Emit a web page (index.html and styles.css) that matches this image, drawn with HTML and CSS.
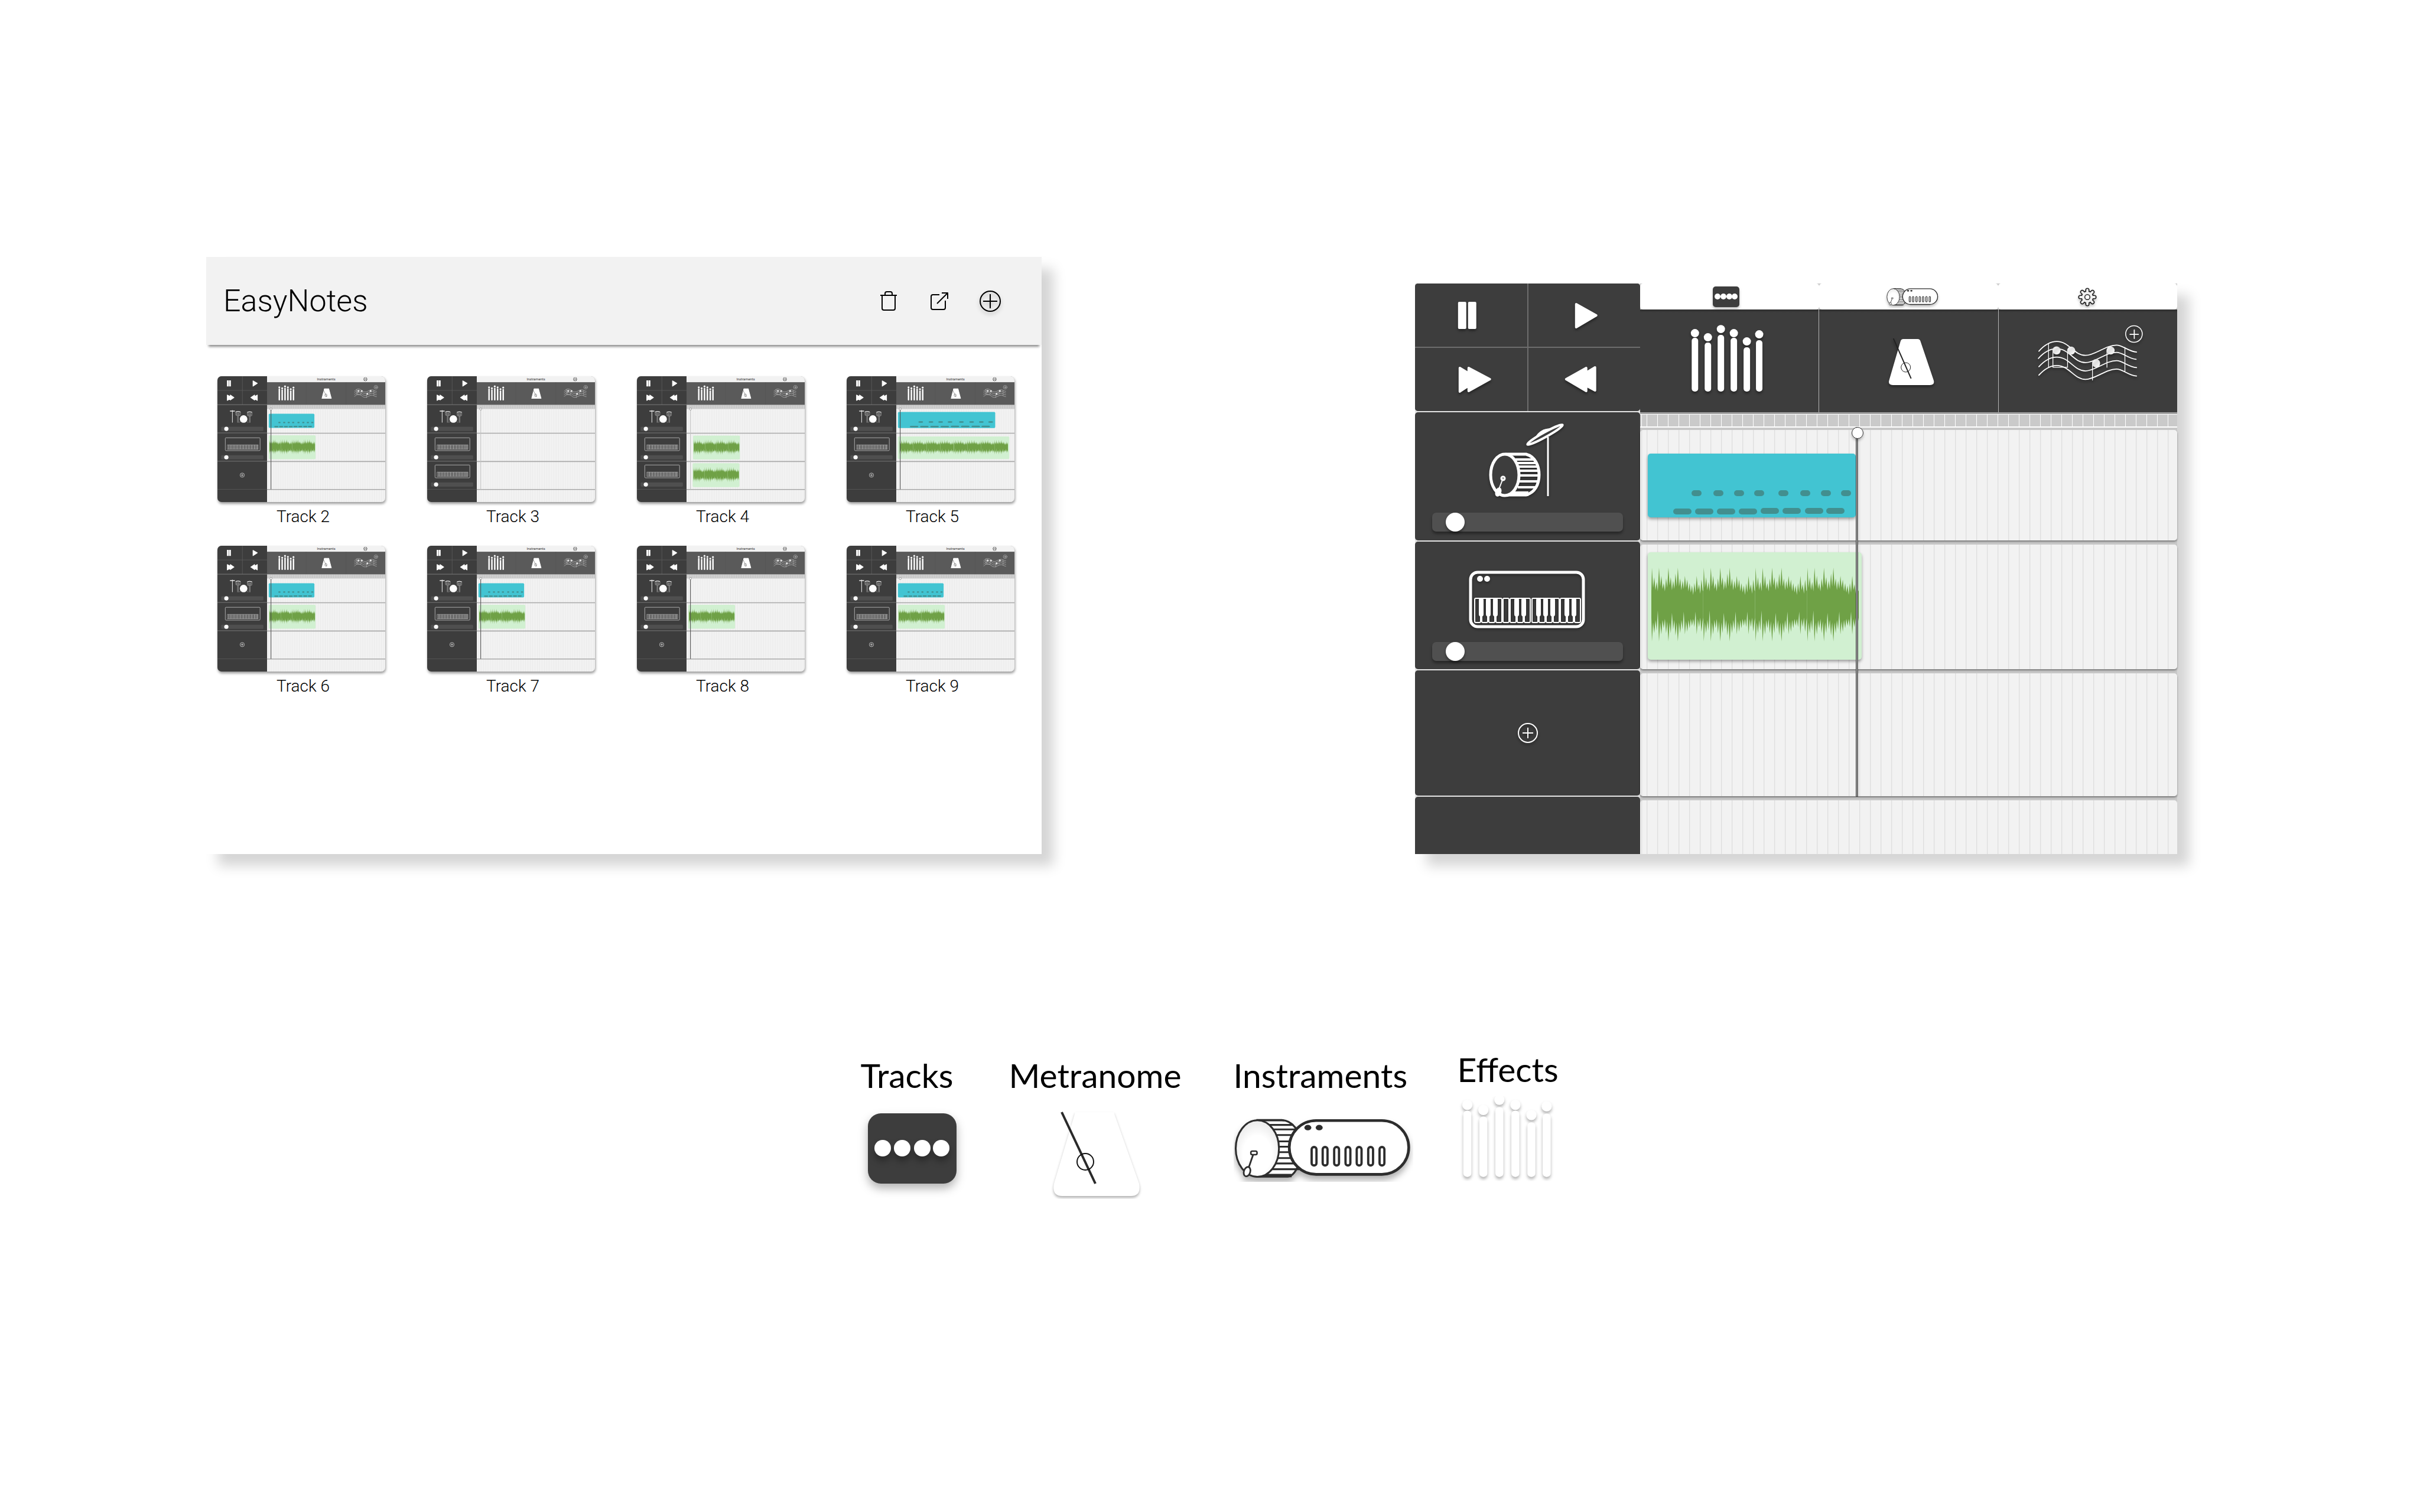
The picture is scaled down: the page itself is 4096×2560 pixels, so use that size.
FILE: index.html
```html
<!DOCTYPE html>
<html lang="en">
<head>
<meta charset="utf-8">
<title>EasyNotes</title>
<link rel="stylesheet" href="styles.css">
</head>
<body>

<svg class="defs" aria-hidden="true">
  <defs>
    <linearGradient id="note-fill" x1="0" y1="0" x2="1" y2="1">
      <stop offset="0" stop-color="#fff"/><stop offset=".45" stop-color="#ddd"/><stop offset="1" stop-color="#fff"/>
    </linearGradient>
    <radialGradient id="head-fill" cx=".5" cy=".6" r=".55">
      <stop offset=".6" stop-color="#fff"/><stop offset="1" stop-color="#ededed"/>
    </radialGradient>
    <pattern id="mini-lines" x="343" y="0" width="15.5" height="40" patternUnits="userSpaceOnUse">
      <rect width="15.5" height="40" fill="#f2f2f2"/><rect x="12" width="3" height="40" fill="#e9e9e9"/>
    </pattern>
    <pattern id="mini-ruler" x="343" y="0" width="15.5" height="40" patternUnits="userSpaceOnUse">
      <rect width="15.5" height="40" fill="#c9c9c9"/><rect x="12" width="2" height="40" fill="#e2e2e2"/>
    </pattern>

    <g id="staff" fill="none" stroke="#fff" stroke-width="7" stroke-linecap="round">
      <path d="M98 463C135 422 170 399 217 399C300 399 330 491 407 491C470 491 540 423 612 423C655 423 690 465 745 469"/>
      <path d="M95 511C132 470 170 447 217 447C300 447 330 539 407 539C470 539 540 471 612 471C655 471 690 513 742 517"/>
      <path d="M98 566C135 525 170 502 217 502C300 502 330 594 407 594C470 594 540 526 612 526C655 526 690 568 745 572"/>
      <path d="M98 622C135 581 170 558 217 558C300 558 330 650 407 650C470 650 540 582 612 582C655 582 690 624 745 628"/>
      <path d="M162 412V571M191 460V570H288V465M453 545V655M549 462V570M668 438V596" stroke-width="5"/>
      <g fill="url(#note-fill)" stroke="none">
        <circle cx="215" cy="458" r="27"/><circle cx="312" cy="459" r="27"/><circle cx="477" cy="543" r="27"/><circle cx="573" cy="458" r="27"/>
      </g>
      <circle cx="728" cy="349" r="55" stroke-width="6"/>
      <path d="M702 352H757M730 322V379"/>
    </g>

    <g id="sliders" fill="#fff">
      <circle cx="93" cy="40" r="7"/><circle cx="115" cy="47" r="7"/><circle cx="137" cy="33" r="7"/>
      <circle cx="159" cy="40" r="7"/><circle cx="181" cy="54" r="7"/><circle cx="202" cy="42" r="7"/>
      <rect x="87.500" y="48" width="11" height="91" rx="5"/><rect x="109.500" y="56" width="11" height="83" rx="5"/>
      <rect x="131.500" y="43" width="11" height="96" rx="5"/><rect x="153.500" y="48" width="11" height="91" rx="5"/>
      <rect x="175.500" y="64" width="11" height="75" rx="5"/><rect x="196.500" y="52" width="11" height="87" rx="5"/>
    </g>

    <g id="instruments" fill="none" stroke="#2d2d2d">
      <path d="M213 88H375C440 92 500 150 505 275C500 400 450 460 415 462H213Z" fill="#fff" stroke-width="13"/>
      <path d="M230 120H452M230 150H470M230 187H470M230 229H470M230 264H470M230 300H470M230 339H470M230 375H480M230 413H490" stroke-width="12"/>
      <path d="M213 455H440" stroke-width="22"/><path d="M213 90H390" stroke-width="12"/>
      <ellipse cx="213" cy="276" rx="143" ry="187" fill="url(#head-fill)" stroke-width="12"/>
      <path d="M185 318L158 396" stroke-width="11"/>
      <rect x="170" y="293" width="41" height="24" rx="10" fill="#fff" stroke-width="10"/>
      <ellipse cx="145" cy="429" rx="21" ry="32" transform="rotate(18 145 429)" fill="#fff" stroke-width="11"/>
      <rect x="424" y="91" width="790" height="356" rx="178" fill="#fff" stroke-width="18"/>
      <g fill="#2d2d2d" stroke="none"><ellipse cx="547" cy="138" rx="23" ry="18"/><ellipse cx="622" cy="138" rx="23" ry="18"/></g>
      <g stroke-width="15">
        <rect x="572" y="266" width="32" height="122" rx="16"/><rect x="645" y="266" width="32" height="122" rx="16"/>
        <rect x="721" y="266" width="32" height="122" rx="16"/><rect x="796" y="266" width="32" height="122" rx="16"/>
        <rect x="870" y="266" width="32" height="122" rx="16"/><rect x="946" y="266" width="32" height="122" rx="16"/>
        <rect x="1021" y="266" width="32" height="122" rx="16"/>
      </g>
    </g>

    <g id="gear" stroke-linecap="round">
      <g stroke="#222" stroke-width="28"><path d="M0-47V47M-47 0H47M-34-34L34 34M-34 34L34-34"/></g>
      <circle r="43" fill="#222"/>
      <g stroke="#efefef" stroke-width="15"><path d="M0-47V47M-47 0H47M-34-34L34 34M-34 34L34-34"/></g>
      <circle r="36" fill="#efefef"/>
      <circle r="17" fill="#fff" stroke="#222" stroke-width="6"/>
    </g>

    <g id="wave-part">
      <path d="M0-22L1-62L3-28L5-46L7-24L9-38L11-22L13-62L15-30L17-48L19-26L21-36L23-22L25-44L27-28L29-62L31-32L33-46L35-24L37-40L39-26L41-52L43-30L45-62L47-30L49-44L51-24L53-40L55-26L57-48L59-28L61-42L63-22L65-36L67-20L69-32L71-16L73-36L75-20L77-48L79-24L81-34L83-18L85-42L87-24L88-22V22L87 28L85 46L83 22L81 38L79 24L77 50L75 12L73 38L71 24L69 36L67 24L65 40L63 26L61 46L59 28L57 50L55 12L53 42L51 26L49 48L47 30L45 62L43 30L41 52L39 26L37 42L35 14L33 48L31 30L29 62L27 28L25 48L23 24L21 40L19 26L17 50L15 30L13 62L11 10L9 44L7 26L5 48L3 30L1 62L0 22Z"/>
    </g>
    <symbol id="wave" viewBox="0 -63 352 126" preserveAspectRatio="none">
      <g fill="#6fa146"><use href="#wave-part"/><use href="#wave-part" x="88"/><use href="#wave-part" x="176"/><use href="#wave-part" x="264"/></g>
    </symbol>
    <symbol id="beats" viewBox="0 0 352 108" preserveAspectRatio="none">
      <g fill="#428f8f">
        <rect x="74" y="62" width="17" height="10" rx="5"/><rect x="111" y="62" width="17" height="10" rx="5"/><rect x="146" y="62" width="17" height="10" rx="5"/><rect x="180" y="62" width="17" height="10" rx="5"/>
        <rect x="221" y="62" width="17" height="10" rx="5"/><rect x="258" y="62" width="17" height="10" rx="5"/><rect x="293" y="62" width="17" height="10" rx="5"/><rect x="327" y="62" width="17" height="10" rx="5"/>
        <rect x="43" y="93" width="31" height="10" rx="5"/><rect x="80" y="93" width="31" height="10" rx="5"/><rect x="117" y="93" width="31" height="10" rx="5"/><rect x="154" y="93" width="31" height="10" rx="5"/>
        <rect x="191" y="92" width="31" height="10" rx="5"/><rect x="228" y="92" width="31" height="10" rx="5"/><rect x="266" y="92" width="31" height="10" rx="5"/><rect x="302" y="92" width="31" height="10" rx="5"/>
      </g>
    </symbol>

    <!-- Parts of the project miniatures -->
    <g id="mini-slider">
      <rect x="41" y="0" width="279" height="28" rx="6" fill="#4f4f4f"/><circle cx="75" cy="14" r="14" fill="#fff"/>
    </g>
    <g id="mini-plus" fill="none" stroke="#ddd" stroke-width="3">
      <circle cx="180" cy="669" r="14"/><path d="M172 669H188M180 661V677"/>
    </g>
    <g id="mini-keys">
      <g fill="none" stroke="#ccc">
        <rect x="68" y="422" width="230" height="85" rx="5" stroke-width="3"/>
        <path d="M81 469H286V498H81Z" stroke-width="2"/>
        <path d="M90 469V498M100 469V498M110 469V498M120 469V498M130 469V498M140 469V498M150 469V498M160 469V498M170 469V498M180 469V498M190 469V498M200 469V498M210 469V498M220 469V498M230 469V498M240 469V498M250 469V498M260 469V498M270 469V498M279 469V498" stroke-width="4"/>
      </g>
      <use href="#mini-slider" y="537"/>
    </g>
    <g id="mini-frame">
      <rect x="16" y="15" width="1109" height="832" fill="#a9a9a9"/>
      <rect x="343" y="15" width="782" height="39" fill="#f2f2f2"/>
      <rect x="343" y="55" width="782" height="148" fill="#5a5a5a"/>
      <path d="M602 55V203M866 55V203" stroke="#525252" stroke-width="2"/>
      <rect x="343" y="206" width="782" height="24" fill="url(#mini-ruler)"/>
      <path d="M343 231H1125V389H343ZM343 395H1125V576H343ZM343 582H1125V761H343ZM343 767H1125V847H343Z" fill="url(#mini-lines)"/>
      <rect x="16" y="15" width="328" height="832" fill="#3d3d3d"/>
      <path d="M181 15V203M16 109H344" stroke="#5e5e5e" stroke-width="3"/>
      <path d="M16 203H344M16 390H344M16 577H344" stroke="#8c8c8c" stroke-width="3"/>
      <path d="M16 763H344" stroke="#5a5a5a" stroke-width="3"/>
      <g fill="#fff">
        <rect x="79" y="42" width="12" height="40" rx="2"/><rect x="93" y="42" width="12" height="40" rx="2"/>
        <g stroke="#fff" stroke-width="4" stroke-linejoin="round">
          <path d="M251 45L280 62L251 81ZM81 139L101 150V139L126 156L101 173V165L81 175ZM280 139L262 150V139L236 156L262 173V165L280 175Z"/>
          <path d="M723 98H752L769 161H707Z"/>
        </g>
        <use href="#sliders" transform="translate(345 53) scale(.86 .88)"/>
        <path d="M99 243H131V248H99ZM113 240H117V322H113Z" opacity=".9"/>
        <circle cx="189" cy="298" r="25"/>
      </g>
      <path d="M712 97L739 152M733 132A7 9 0 1 0 733 150A7 9 0 1 0 733 132" fill="none" stroke="#444" stroke-width="2"/>
      <use href="#staff" transform="translate(900 9.500) scale(.2246)"/>
      <g fill="none" stroke="#ccc" stroke-width="2">
        <path d="M136 252Q152 244 169 252L167 273Q152 280 138 273ZM142 255V272M148 256V274M154 256V274M160 256V274M149 277V322M154 277V322M213 254Q229 246 245 254L243 276Q229 282 215 276ZM219 258V275M225 258V277M231 258V277M237 258V275M227 279V322M232 279V322M168 312L160 322M210 312L219 322"/>
        <path d="M137 251Q152 245 168 251M214 253Q229 247 244 253" stroke="#fff" stroke-width="4"/>
      </g>
      <use href="#mini-slider" y="349"/>
      <use href="#mini-keys"/>
      <use href="#gear" transform="translate(994 35) scale(.22)"/>
    </g>
    <g id="mini-head"><circle cx="370" cy="232" r="7" fill="#fff" stroke="#555" stroke-width="2"/></g>
    <g id="mini-playhead"><path d="M370 238V763" stroke="#4a4a4a" stroke-width="4"/><use href="#mini-head"/></g>
    <g id="mini-playhead-off"><path d="M370 238V763" stroke="#c4c4c4" stroke-width="4"/><use href="#mini-head"/></g>
    <g id="mini-blue"><rect x="355" y="263" width="302" height="94" rx="7" fill="#42c4d2"/><use href="#beats" x="355" y="263" width="302" height="94"/></g>
    <g id="mini-green"><rect x="355" y="406" width="310" height="158" rx="7" fill="#d1f0d1"/><use href="#wave" x="359" y="430" width="303" height="104"/></g>
  </defs>
</svg>

<main class="showcase">
  <section class="library">
    <header class="library-bar">
      <h1 class="library-title">EasyNotes</h1>
      <div class="library-actions">
        <button class="icon-button" type="button" aria-label="Delete">
          <svg viewBox="0 0 40 40"><path d="M6 10H34M9 10V32Q9 35 12 35H28Q31 35 31 32V10M14 10V7Q14 4 17 4H23Q26 4 26 7V10"/></svg>
        </button>
        <button class="icon-button" type="button" aria-label="Share">
          <svg viewBox="0 0 40 40"><path d="M20 9H9Q6 9 6 12V31Q6 34 9 34H27Q30 34 30 31V19M16 24L34 6M24 6H34V16"/></svg>
        </button>
        <button class="icon-button icon-button--raised" type="button" aria-label="New track">
          <svg viewBox="0 0 40 40"><circle cx="20" cy="20" r="17"/><path d="M8 20H32M20 8V32"/></svg>
        </button>
      </div>
    </header>
    <ul class="projects">
      <li><a class="project" href="#track-2">
        <svg class="project-thumb" viewBox="16 15 1109 832" preserveAspectRatio="none"><use href="#mini-frame"/><text class="thumb-text" x="735" y="41">Instraments</text><use href="#mini-plus"/><use href="#mini-blue"/><use href="#mini-green"/><use href="#mini-playhead"/></svg>
        <span class="project-name">Track 2</span></a></li>
      <li><a class="project" href="#track-3">
        <svg class="project-thumb" viewBox="16 15 1109 832" preserveAspectRatio="none"><use href="#mini-frame"/><text class="thumb-text" x="735" y="41">Instraments</text><use href="#mini-keys" y="180"/><use href="#mini-playhead-off"/></svg>
        <span class="project-name">Track 3</span></a></li>
      <li><a class="project" href="#track-4">
        <svg class="project-thumb" viewBox="16 15 1109 832" preserveAspectRatio="none"><use href="#mini-frame"/><text class="thumb-text" x="735" y="41">Instraments</text><use href="#mini-keys" y="180"/><use href="#mini-playhead-off"/><use href="#mini-green" x="32" y="2"/><use href="#mini-green" x="29" y="184"/></svg>
        <span class="project-name">Track 4</span></a></li>
      <li><a class="project" href="#track-5">
        <svg class="project-thumb" viewBox="16 15 1109 832" preserveAspectRatio="none"><use href="#mini-frame"/><text class="thumb-text" x="735" y="41">Instraments</text><use href="#mini-plus"/><rect x="355" y="251" width="643" height="107" rx="7" fill="#42c4d2"/><use href="#beats" x="355" y="251" width="643" height="107"/><rect x="354" y="413" width="737" height="150" rx="7" fill="#d1f0d1"/><use href="#wave" x="365" y="434" width="359" height="100"/><use href="#wave" x="724" y="434" width="359" height="100"/><use href="#mini-playhead"/></svg>
        <span class="project-name">Track 5</span></a></li>
      <li><a class="project" href="#track-6">
        <svg class="project-thumb" viewBox="16 15 1109 832" preserveAspectRatio="none"><use href="#mini-frame"/><text class="thumb-text" x="735" y="41">Instraments</text><use href="#mini-plus"/><use href="#mini-blue"/><use href="#mini-green"/><use href="#mini-playhead"/></svg>
        <span class="project-name">Track 6</span></a></li>
      <li><a class="project" href="#track-7">
        <svg class="project-thumb" viewBox="16 15 1109 832" preserveAspectRatio="none"><use href="#mini-frame"/><text class="thumb-text" x="735" y="41">Instraments</text><use href="#mini-plus"/><use href="#mini-blue"/><use href="#mini-green"/><use href="#mini-playhead"/></svg>
        <span class="project-name">Track 7</span></a></li>
      <li><a class="project" href="#track-8">
        <svg class="project-thumb" viewBox="16 15 1109 832" preserveAspectRatio="none"><use href="#mini-frame"/><text class="thumb-text" x="735" y="41">Instraments</text><use href="#mini-plus"/><use href="#mini-green"/><use href="#mini-playhead"/></svg>
        <span class="project-name">Track 8</span></a></li>
      <li><a class="project" href="#track-9">
        <svg class="project-thumb" viewBox="16 15 1109 832" preserveAspectRatio="none"><use href="#mini-frame"/><text class="thumb-text" x="735" y="41">Instraments</text><use href="#mini-plus"/><use href="#mini-blue"/><use href="#mini-green"/><use href="#mini-head"/></svg>
        <span class="project-name">Track 9</span></a></li>
    </ul>
  </section>

  <section class="editor">
    <div class="sidebar">
      <div class="transport">
        <button class="transport-button" type="button" aria-label="Pause">
          <svg viewBox="0 0 190 107"><rect x="73" y="31" width="14" height="46" rx="2"/><rect x="90" y="31" width="14" height="46" rx="2"/></svg>
        </button>
        <button class="transport-button" type="button" aria-label="Play">
          <svg viewBox="0 0 190 107"><path d="M81 35L115 54L81 74Z"/></svg>
        </button>
        <button class="transport-button" type="button" aria-label="Fast forward">
          <svg viewBox="0 0 190 107"><path d="M76 34L91 43V34L127 53L91 73V64L76 74Z"/></svg>
        </button>
        <button class="transport-button" type="button" aria-label="Rewind">
          <svg viewBox="0 0 190 107"><path d="M113 33L98 42V34L64 53L98 73V64L113 72Z"/></svg>
        </button>
      </div>
      <div class="channel channel--first">
        <svg class="channel-icon" viewBox="0 0 381 170">
          <g fill="none" stroke="#fff">
            <path d="M153 71H188C203 75 210 90 210 106C210 122 203 136 188 140H153" stroke-width="5"/>
            <path d="M170 80H200M173 86H205M175 92H208M177 99H209M178 107H209M177 117H208M174 127H205" stroke-width="4"/>
            <path d="M160 138H192" stroke-width="8"/>
            <ellipse cx="152" cy="106" rx="24" ry="35" fill="#3d3d3d" stroke-width="5"/>
            <path d="M149 112L142 130" stroke-width="2"/>
            <circle cx="149" cy="112" r="3" stroke-width="3"/>
            <ellipse cx="141" cy="135" rx="3" ry="6" transform="rotate(20 141 135)" fill="#fff" stroke-width="4"/>
            <path d="M225 42V142" stroke-width="3"/>
            <g transform="rotate(-29 220 38)">
              <path d="M204 34Q219 25 234 34Z" fill="#fff" stroke-width="1"/>
              <ellipse cx="220" cy="38" rx="34" ry="4" fill="#3d3d3d" stroke-width="4"/>
            </g>
          </g>
        </svg>
        <input class="volume" type="range" min="0" max="100" value="8" aria-label="Drums volume">
      </div>
      <div class="channel channel--second">
        <svg class="channel-icon" viewBox="0 0 381 170">
          <g fill="none" stroke="#fff">
            <rect x="94" y="52" width="191" height="92" rx="12" stroke-width="5"/>
            <g stroke-width="2">
              <rect x="101" y="96" width="10" height="41" rx="2"/><rect x="113" y="96" width="10" height="41" rx="2"/><rect x="125" y="96" width="10" height="41" rx="2"/><rect x="137" y="96" width="10" height="41" rx="2"/><rect x="149" y="96" width="10" height="41" rx="2"/>
              <rect x="161" y="96" width="10" height="41" rx="2"/><rect x="173" y="96" width="10" height="41" rx="2"/><rect x="185" y="96" width="10" height="41" rx="2"/><rect x="198" y="96" width="10" height="41" rx="2"/><rect x="210" y="96" width="10" height="41" rx="2"/>
              <rect x="222" y="96" width="10" height="41" rx="2"/><rect x="234" y="96" width="10" height="41" rx="2"/><rect x="246" y="96" width="10" height="41" rx="2"/><rect x="258" y="96" width="10" height="41" rx="2"/><rect x="270" y="96" width="10" height="41" rx="2"/>
            </g>
            <path d="M112 99V123M124 99V123M136 99V123M172 99V123M184 99V123M209 99V123M221 99V123M233 99V123M257 99V123M269 99V123" stroke-width="8" stroke-linecap="round"/>
          </g>
          <g fill="#fff"><circle cx="110" cy="63" r="5"/><circle cx="122" cy="63" r="5"/></g>
        </svg>
        <input class="volume" type="range" min="0" max="100" value="8" aria-label="Keyboard volume">
      </div>
      <button class="channel channel--add" type="button" aria-label="Add instrument">
        <svg class="add-icon" viewBox="0 0 36 36"><circle cx="18" cy="18" r="16"/><path d="M9 18H27M18 9V27"/></svg>
      </button>
      <div class="channel channel--last"></div>
    </div>

    <div class="stage">
      <nav class="tabs">
        <button class="tab" type="button" aria-label="Tracks">
          <svg viewBox="0 0 303 44"><rect x="123" y="5" width="45" height="35" rx="5" fill="#3d3d3d"/><g fill="#fff"><circle cx="131" cy="22" r="5"/><circle cx="141" cy="22" r="5"/><circle cx="151" cy="22" r="5"/><circle cx="160" cy="22" r="5"/></g></svg>
        </button>
        <button class="tab" type="button" aria-label="Instruments">
          <svg viewBox="0 0 303 44"><use href="#instruments" transform="translate(109.500 2) scale(.075)"/></svg>
        </button>
        <button class="tab" type="button" aria-label="Settings">
          <svg viewBox="0 0 303 44"><use href="#gear" transform="translate(151 23) scale(.256)"/></svg>
        </button>
      </nav>
      <div class="tiles">
        <button class="tile" type="button" aria-label="Effects">
          <svg viewBox="0 0 303 174"><use href="#sliders"/></svg>
        </button>
        <button class="tile" type="button" aria-label="Metronome">
          <svg viewBox="0 0 303 174">
            <path d="M143 50H167Q171 50 172 54L194 119Q197 128 188 128H125Q116 128 119 119L138 54Q139 50 143 50Z" fill="#fff"/>
            <path d="M126 49L156 117" stroke="#222" stroke-width="2"/><circle cx="147" cy="98" r="8" fill="none" stroke="#222"/>
          </svg>
        </button>
        <button class="tile" type="button" aria-label="Add notes">
          <svg viewBox="0 0 303 174"><use href="#staff" transform="translate(43 -48) scale(.256)"/></svg>
        </button>
      </div>
      <div class="timeline">
        <div class="ruler"></div>
        <div class="lane lane--first">
          <svg class="clip clip--beats" viewBox="0 0 352 108"><use href="#beats" width="352" height="108"/></svg>
        </div>
        <div class="lane lane--second">
          <svg class="clip clip--audio" viewBox="0 0 362 182"><use href="#wave" x="6" y="25" width="351" height="127"/></svg>
        </div>
        <div class="lane lane--third"></div>
        <div class="lane lane--last"></div>
        <div class="playhead"></div>
      </div>
    </div>
  </section>
</main>

<section class="legend">
  <figure class="legend-item">
    <figcaption class="legend-name">Tracks</figcaption>
    <svg class="legend-icon legend-icon--tracks" width="176" height="150" viewBox="0 0 176 150">
      <rect x="12" y="19" width="150" height="119" rx="22" fill="#3d3d3d"/>
      <g class="legend-dots" fill="#fff"><circle cx="37" cy="78" r="14"/><circle cx="70" cy="78" r="14"/><circle cx="104" cy="78" r="14"/><circle cx="136" cy="78" r="14"/></g>
    </svg>
  </figure>
  <figure class="legend-item">
    <figcaption class="legend-name">Metranome</figcaption>
    <svg class="legend-icon" width="240" height="164" viewBox="0 0 240 164">
      <path class="lifted" d="M112 17L76 138Q72 159 90 159H206Q224 159 220 138L177 17Z" fill="#fff"/>
      <path d="M89 17L146 138" stroke="#2a2a2a" stroke-width="4"/><circle cx="129" cy="101" r="14" fill="none" stroke="#111" stroke-width="2"/>
    </svg>
  </figure>
  <figure class="legend-item">
    <figcaption class="legend-name">Instraments</figcaption>
    <svg class="legend-icon" width="304" height="135" viewBox="-4 0 304 135">
      <use class="lifted-far" href="#instruments" transform="translate(-18.400 7.900) scale(.256)"/>
    </svg>
  </figure>
  <figure class="legend-item legend-item--raised">
    <figcaption class="legend-name">Effects</figcaption>
    <svg class="legend-icon" width="170" height="144" viewBox="0 0 170 144">
      <use class="lifted" href="#sliders" transform="translate(-98 -34.600) scale(1.232)"/>
    </svg>
  </figure>
</section>

</body>
</html>
```
FILE: styles.css
```css
* {
  box-sizing: border-box;
}

body {
  margin: 0;
  background: #fff;
  color: #000;
  font-family: Roboto, "Liberation Sans", sans-serif;
}

button {
  display: block;
  padding: 0;
  border: 0;
  background: none;
  cursor: pointer;
}

svg {
  display: block;
}

.defs {
  position: absolute;
  width: 0;
  height: 0;
}

.showcase {
  display: grid;
  grid-template-columns: 1414fr 1290fr;
  column-gap: 632px;
  align-items: end;
  padding: 435px 411px 0 349px;
}

.library,
.editor {
  box-shadow: 20px 20px 20px rgba(0, 0, 0, 0.17);
}

/* Project library */

.library {
  background: #fff;
}

.library-bar {
  display: flex;
  align-items: center;
  justify-content: space-between;
  height: 149px;
  padding: 0 67px 0 29px;
  background: #f2f2f2;
  box-shadow: 0 7px 4px -4px rgba(0, 0, 0, 0.45);
}

.library-title {
  margin: 0;
  font-size: 52px;
  font-weight: 300;
  line-height: 60px;
}

.library-actions {
  display: flex;
  gap: 46px;
}

.icon-button {
  width: 40px;
  height: 40px;
}

.icon-button svg {
  width: 100%;
  fill: none;
  stroke: #000;
  stroke-width: 2;
  stroke-linejoin: round;
}

.icon-button--raised svg {
  filter: drop-shadow(0 4px 3px rgba(0, 0, 0, 0.25));
}

.projects {
  display: grid;
  grid-template-columns: repeat(4, 1fr);
  align-content: start;
  gap: 31px 71px;
  min-height: 862px;
  margin: 0;
  padding: 53px 46px 0 19px;
  list-style: none;
}

.project {
  display: flex;
  flex-direction: column;
  gap: 7px;
  color: #000;
  text-align: center;
  text-decoration: none;
}

.project-thumb {
  width: 100%;
  height: 213px;
  border-radius: 7px;
  box-shadow: 1px 3px 4px rgba(0, 0, 0, 0.4);
}

.thumb-text {
  font-size: 23px;
  text-anchor: middle;
  fill: #333;
}

.project-name {
  padding-left: 6px;
  font-size: 28px;
  font-weight: 300;
  line-height: 36px;
}

/* Track editor */

.editor {
  display: grid;
  grid-template-columns: 381fr 909fr;
}

.sidebar {
  display: flex;
  flex-direction: column;
  gap: 2px;
  background: #e4e4e4;
}

.transport {
  display: grid;
  grid-template-columns: 1fr 1fr;
  grid-auto-rows: 107px;
  gap: 2px;
  overflow: hidden;
  border-radius: 5px;
  background: #6d6d6d;
}

.transport-button {
  background: #3d3d3d;
}

.transport-button svg {
  width: 100%;
  height: 107px;
  fill: #fff;
  stroke: #fff;
  stroke-width: 4;
  stroke-linejoin: round;
  filter: drop-shadow(0 3px 2px rgba(0, 0, 0, 0.4));
}

.transport-button rect {
  stroke: none;
}

.channel {
  display: flex;
  flex-direction: column;
  align-items: center;
  border-radius: 5px;
  background: #3d3d3d;
}

.channel--first {
  height: 217px;
}

.channel--second {
  height: 216px;
}

.channel--add {
  justify-content: center;
  height: 212px;
}

.channel--last {
  height: 97px;
  border-radius: 5px 5px 0 0;
}

.channel-icon {
  width: 100%;
  height: 170px;
  filter: drop-shadow(0 2px 2px rgba(0, 0, 0, 0.4));
}

.add-icon {
  width: 36px;
  fill: none;
  stroke: #fff;
  stroke-width: 2;
  filter: drop-shadow(0 3px 2px rgba(0, 0, 0, 0.4));
}

.volume {
  appearance: none;
  width: 85%;
  height: 32px;
  margin: 0;
  border-radius: 7px;
  background: #505050;
  box-shadow: 0 4px 4px rgba(0, 0, 0, 0.35);
}

.volume::-webkit-slider-thumb {
  appearance: none;
  width: 32px;
  height: 32px;
  border-radius: 50%;
  background: #fff;
  box-shadow: 0 3px 4px rgba(0, 0, 0, 0.4);
}

.stage {
  display: flex;
  flex-direction: column;
  min-width: 0;
}

.tabs {
  display: grid;
  grid-template-columns: repeat(3, 1fr);
  background: #c8c8c8;
}

.tab {
  height: 44px;
  border-radius: 5px;
  background: #fff;
}

.tab svg {
  width: 100%;
  height: 44px;
  filter: drop-shadow(0 3px 2px rgba(0, 0, 0, 0.25));
}

.tiles {
  display: grid;
  grid-template-columns: repeat(3, 1fr);
  gap: 1px;
  background: #b4b4b4;
}

.tile {
  height: 174px;
  background: linear-gradient(#2c2c2c, #3d3d3d 5px);
}

.tile svg {
  width: 100%;
  height: 174px;
  filter: drop-shadow(0 3px 2px rgba(0, 0, 0, 0.4));
}

.timeline {
  position: relative;
  display: flex;
  flex-direction: column;
  gap: 7px;
  background: #c8c8c8;
}

.ruler {
  height: 26px;
  margin-bottom: -3px;
  border-top: 3px solid #a0a0a0;
  background:
    linear-gradient(#fff, #fff) 0 0 / 100% 1px no-repeat,
    linear-gradient(#fff, #fff) 0 100% / 100% 2px no-repeat,
    repeating-linear-gradient(90deg, #fff 0 1px, #cacaca 1px 18px) 11px 0;
}

.lane {
  padding-left: 13px;
  border-radius: 5px;
  background: repeating-linear-gradient(90deg, #dedede 0 1px, #ebebeb 1px 2px, #f2f2f2 2px 18px) 11px 0;
  box-shadow: 0 2px 3px rgba(0, 0, 0, 0.4);
}

.lane--first {
  height: 187px;
  padding-top: 40px;
}

.lane--second {
  height: 211px;
  padding-top: 13px;
}

.lane--third {
  height: 208px;
}

.lane--last {
  height: 91px;
  border-radius: 5px 5px 0 0;
  box-shadow: none;
}

.clip {
  border-radius: 5px;
  box-shadow: 0 3px 5px rgba(0, 0, 0, 0.35);
}

.clip--beats {
  width: 352px;
  height: 108px;
  background: #42c4d2;
}

.clip--audio {
  width: 362px;
  height: 182px;
  background: #d1f0d1;
}

/* The playhead lies over all lanes */
.playhead {
  position: absolute;
  top: 25px;
  bottom: 97px;
  left: 365px;
  width: 4px;
  border: solid #444;
  border-width: 0 1px 1px;
  background: #999;
}

.playhead::before {
  content: "";
  position: absolute;
  top: 0;
  left: -8px;
  width: 18px;
  height: 18px;
  border: 1px solid #333;
  border-radius: 50%;
  background: #fff;
  box-shadow: 0 3px 4px rgba(0, 0, 0, 0.25);
}

/* Icon legend */

.legend {
  display: grid;
  grid-template-columns: 176px 305px 304px 165px;
  column-gap: 75px;
  justify-content: center;
  margin-top: 332px;
  padding: 0 8px 200px 0;
}

.legend-item {
  display: flex;
  flex-direction: column;
  gap: 14px;
  margin: 0;
  padding-top: 10px;
}

.legend-item--raised {
  padding-top: 0;
}

.legend-name {
  font-family: Lato, "Liberation Sans", sans-serif;
  font-size: 57px;
  line-height: 64px;
}

.legend-icon {
  overflow: hidden;
}

.legend-icon--tracks {
  overflow: visible;
  filter: drop-shadow(0 8px 8px rgba(0, 0, 0, 0.3));
}

.legend-dots {
  filter: drop-shadow(0 8px 6px rgba(0, 0, 0, 0.3));
}

.lifted {
  filter: drop-shadow(0 3px 2px rgba(0, 0, 0, 0.3));
}

.lifted-far {
  filter: drop-shadow(0 30px 20px rgba(0, 0, 0, 0.3));
}
```
